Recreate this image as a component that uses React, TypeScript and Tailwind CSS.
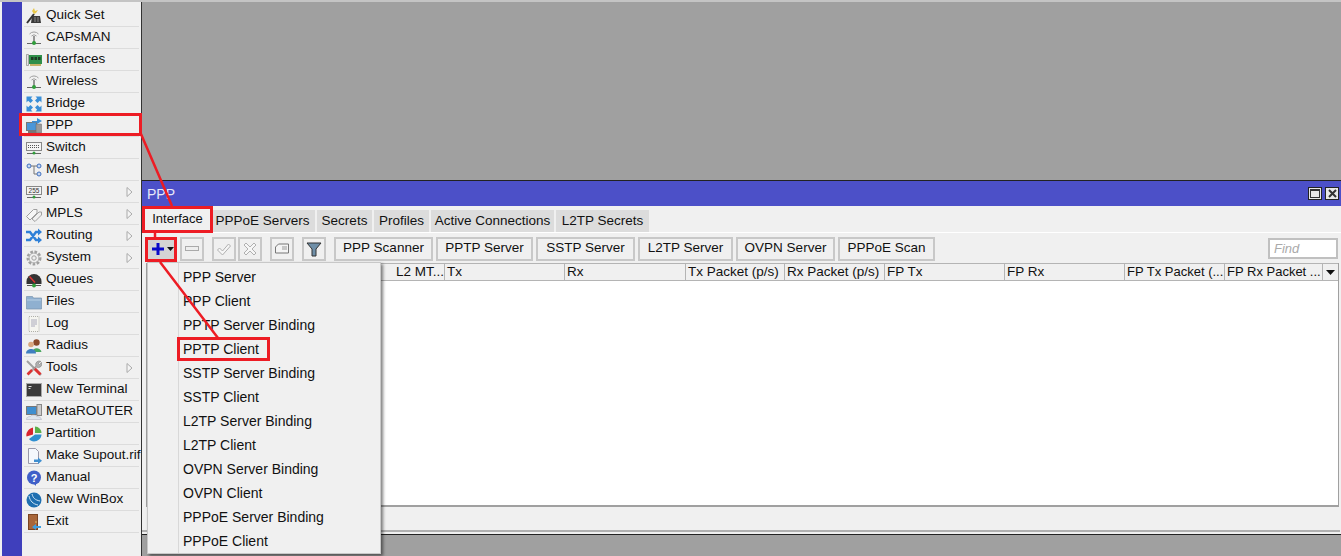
import type { ReactNode } from 'react';

const Svg = ({ children }: { children: ReactNode }) => (
  <svg width="16" height="16" viewBox="0 0 16 16" className="shrink-0">
    {children}
  </svg>
);

const Antenna = () => (
  <Svg>
    <path d="M3.500 4a6 6 0 0 1 9 0M5.500 6a3.500 3.500 0 0 1 5 0" fill="none" stroke="#a0a0a0" strokeWidth="1" />
    <path d="M8 6v6" stroke="#777" strokeWidth="1.500" />
    <path d="M1 13.500h14" stroke="#666" strokeWidth="1" />
    <circle cx="8" cy="13" r="2" fill="#2f9e3a" />
  </Svg>
);

const Chip = ({ label }: { label?: string }) => (
  <Svg>
    <rect x="0.500" y="2.500" width="15" height="8" fill="#f4f4f4" stroke="#888" />
    {label ? (
      <text x="8" y="9" fontSize="6.500" textAnchor="middle" fill="#333" fontFamily="Liberation Sans, sans-serif">
        {label}
      </text>
    ) : (
      <path d="M2 5.500h12M2 7.500h12" stroke="#555" strokeDasharray="1 1" />
    )}
    <path d="M1 13.500h14" stroke="#666" />
    <circle cx="8" cy="13" r="1.500" fill="#2f9e3a" />
  </Svg>
);

const icons: Record<string, ReactNode> = {
  'Quick Set': (
    <Svg>
      <path d="M6 8h8l1 7H5z" fill="#3a3a3a" />
      <path d="M1 15l7-9" stroke="#333" strokeWidth="2" />
      <path d="M6 3l2-3 1 3 3-1-2 3-2 1z" fill="#e8c84a" />
      <path d="M9 9v5M12 9v5" stroke="#8a8a8a" />
    </Svg>
  ),
  CAPsMAN: <Antenna />,
  Interfaces: (
    <Svg>
      <path d="M0.500 2.500h2v11h-2z" fill="#e4e4e4" stroke="#888" strokeWidth="0.700" />
      <rect x="3" y="3" width="13" height="9" fill="#2f8f4a" />
      <path d="M5 5h2.500v3H5zM8.500 5H11v3H8.500zM12 5h2.500v3H12z" fill="#1d3a25" />
      <path d="M4 13h11" stroke="#b89c3a" strokeWidth="1.500" />
    </Svg>
  ),
  Wireless: <Antenna />,
  Bridge: (
    <Svg>
      <path d="M0.500 0.500h6L4.800 2.200 7 4.500 4.500 7 2.200 4.800 0.500 6.500zM15.500 0.500v6l-1.700-1.700L11.500 7 9 4.500l2.200-2.300L9.500 0.500zM0.500 15.500v-6l1.700 1.700L4.500 9 7 11.500l-2.200 2.300 1.700 1.700zM15.500 15.500h-6l1.700-1.700L9 11.500 11.500 9l2.300 2.200 1.700-1.700z" fill="#3a8fd8" />
    </Svg>
  ),
  PPP: (
    <Svg>
      <rect x="0.500" y="4.500" width="10" height="8" fill="#4a96d8" stroke="#777" />
      <rect x="10" y="6" width="5.500" height="9" fill="#9a9a9a" stroke="#666" strokeWidth="0.500" />
      <path d="M2 14h8" stroke="#777" strokeWidth="2" />
      <path d="M6 3h5V0l5 3-5 3V4.500H6z" fill="#3a8fd8" />
    </Svg>
  ),
  Switch: <Chip />,
  Mesh: (
    <Svg>
      <circle cx="3" cy="4" r="2" fill="#c8d8f0" stroke="#3f6fc0" />
      <circle cx="13" cy="4" r="2" fill="#c8d8f0" stroke="#3f6fc0" />
      <circle cx="13" cy="12" r="2" fill="#c8d8f0" stroke="#3f6fc0" />
      <path d="M5 4h6M8 4v8h3" fill="none" stroke="#777" />
    </Svg>
  ),
  IP: <Chip label="255" />,
  MPLS: (
    <Svg>
      <path d="M0.500 10.500l7-7h3.500v3.500l-7 7z" fill="#f6f6f6" stroke="#a0a0a0" />
      <path d="M6 13l7-7h2.500v3l-6.500 6.500z" fill="#f0f0f0" stroke="#a0a0a0" />
    </Svg>
  ),
  Routing: (
    <Svg>
      <path d="M0 4h4l6 8h2M0 12h4l6-8h2" fill="none" stroke="#2f80d8" strokeWidth="2.500" />
      <path d="M12 0.500l4 3.500-4 3.500zM12 8.500l4 3.500-4 3.500z" fill="#2f80d8" />
    </Svg>
  ),
  System: (
    <Svg>
      <circle cx="8" cy="8" r="6" fill="none" stroke="#a0a0a0" strokeWidth="3" strokeDasharray="2.500 1.500" />
      <circle cx="8" cy="8" r="5" fill="none" stroke="#b4b4b4" />
      <circle cx="8" cy="8" r="2.200" fill="#eee" stroke="#a0a0a0" />
    </Svg>
  ),
  Queues: (
    <Svg>
      <path d="M0.500 9.500a7.500 7.500 0 0 1 15 0V12H0.500z" fill="#333" />
      <path d="M3.500 4.500l5.500 6" stroke="#d33" strokeWidth="1.500" />
      <path d="M1 13.500h14" stroke="#555" />
      <circle cx="8" cy="13.500" r="2" fill="#2f9e3a" />
    </Svg>
  ),
  Files: (
    <Svg>
      <path d="M0.500 2.500h6l1 1.500h8v11h-15z" fill="#8fb0d0" stroke="#7a93ad" strokeWidth="0.700" />
      <path d="M1 6h14" stroke="#b8cfe4" />
    </Svg>
  ),
  Log: (
    <Svg>
      <path d="M3 0.500h10v15H3z" fill="#f5f5f0" stroke="#b0b0a8" strokeDasharray="1 1" />
      <path d="M5 4h6M5 6h6M5 8h6M5 10h4" stroke="#aab" />
    </Svg>
  ),
  Radius: (
    <Svg>
      <circle cx="10.500" cy="4.500" r="3.200" fill="#8a4a2a" />
      <path d="M6.500 14c0-5 8-5 9 0z" fill="#4aa860" />
      <circle cx="5" cy="6.500" r="2.800" fill="#d9a77f" />
      <path d="M0 15.500c0-6 10-6 10 0z" fill="#3f7fc0" />
    </Svg>
  ),
  Tools: (
    <Svg>
      <path d="M1 1l14 14" stroke="#a0a0a0" strokeWidth="2" />
      <path d="M8 8l6.500 6.500" stroke="#d33" strokeWidth="3" />
      <path d="M15 1.500a3.500 3.500 0 0 0-5 4.500L1.500 13 3 14.500 10.500 7a3.500 3.500 0 0 0 5-4.500l-2 2-1.500-1.500z" fill="#b0b0b0" stroke="#777" strokeWidth="0.500" />
      <path d="M1.500 14.500L6 10" stroke="#d33" strokeWidth="2.500" />
    </Svg>
  ),
  'New Terminal': (
    <Svg>
      <rect x="0.500" y="1.500" width="15" height="13" fill="#3a3a3a" stroke="#a8a8a8" />
      <path d="M2.500 4.500h3M2.500 6.500h2" stroke="#ddd" />
    </Svg>
  ),
  MetaROUTER: (
    <Svg>
      <rect x="0.500" y="2.500" width="10" height="8" fill="#3f8fd0" stroke="#777" />
      <rect x="11" y="0.500" width="4.500" height="11" fill="#ccc" stroke="#888" />
      <path d="M0.500 15.500c0-3 3-3 4-3 1-2 5-2 6 0 2 0 5 1 5 3z" fill="#dfe6ee" stroke="#aab" strokeWidth="0.500" />
    </Svg>
  ),
  Partition: (
    <Svg>
      <path d="M7 1.500V8.500l-6.500 2c-1-4 2.500-8 6.500-9z" fill="#d9232e" />
      <path d="M9 0.500c3.500 0 6.500 3 6.500 6.500H9z" fill="#5bb04a" />
      <path d="M15.500 8.500c0 4-4 7-7.500 7-2 0-4-1-5-2.500l6-4.500z" fill="#2f8fd0" />
    </Svg>
  ),
  'Make Supout.rif': (
    <Svg>
      <path d="M2.500 0.500h7l3 3V15.500h-10z" fill="#f4f8fc" stroke="#99a" />
      <path d="M8 11.500h4v-2l4 3.200-4 3.200v-2H8z" fill="#3f8fd0" />
    </Svg>
  ),
  Manual: (
    <Svg>
      <circle cx="8" cy="7.500" r="7" fill="#3f5fc8" />
      <path d="M7 13l3 3v-3z" fill="#3f5fc8" />
      <text x="8" y="11.500" fontSize="11" fontWeight="700" textAnchor="middle" fill="#fff" fontFamily="Liberation Sans, sans-serif">
        ?
      </text>
    </Svg>
  ),
  'New WinBox': (
    <Svg>
      <circle cx="8" cy="8" r="7.500" fill="#1f6fb0" />
      <path d="M3 4c1 5 4 8 9 9M6 2c1 4 3 6 8 7" fill="none" stroke="#cfe6f7" />
    </Svg>
  ),
  Exit: (
    <Svg>
      <rect x="2.500" y="0.500" width="9" height="15" fill="#a8663a" stroke="#7a4522" />
      <circle cx="10" cy="8" r="0.800" fill="#f0d070" />
      <path d="M6 13l4-3v2h5v2h-5v2z" fill="#3f9fe0" />
    </Svg>
  ),
};

const menu = [
  ['Quick Set'], ['CAPsMAN'], ['Interfaces'], ['Wireless'], ['Bridge'], ['PPP'], ['Switch'], ['Mesh'],
  ['IP', 1], ['MPLS', 1], ['Routing', 1], ['System', 1], ['Queues'], ['Files'], ['Log'], ['Radius'],
  ['Tools', 1], ['New Terminal'], ['MetaROUTER'], ['Partition'], ['Make Supout.rif'], ['Manual'], ['New WinBox'], ['Exit'],
] as [string, number?][];

const tabs = [
  ['PPPoE Servers', 'w-[102px] pr-[3px]'],
  ['Secrets', 'w-[55px]'],
  ['Profiles', 'w-[55px]'],
  ['Active Connections', 'w-[123px]'],
  ['L2TP Secrets', 'w-[93px]'],
];

const textButtons = [
  ['PPP Scanner', 'w-[99px]'],
  ['PPTP Server', 'w-[97px]'],
  ['SSTP Server', 'w-[99px]'],
  ['L2TP Server', 'w-[95px]'],
  ['OVPN Server', 'w-[99px]'],
  ['PPPoE Scan', 'w-[97px]'],
];

const columns = [
  ['L2 MT...', 'w-[51px]'],
  ['Tx', 'w-[120px]'],
  ['Rx', 'w-[121px]'],
  ['Tx Packet (p/s)', 'w-[99px]'],
  ['Rx Packet (p/s)', 'w-[100px]'],
  ['FP Tx', 'w-[120px]'],
  ['FP Rx', 'w-[120px]'],
  ['FP Tx Packet (...', 'w-[100px] text-[13px]'],
  ['FP Rx Packet ...', 'w-[98px] text-[13px]'],
];

const addItems = [
  'PPP Server', 'PPP Client', 'PPTP Server Binding', 'PPTP Client', 'SSTP Server Binding', 'SSTP Client',
  'L2TP Server Binding', 'L2TP Client', 'OVPN Server Binding', 'OVPN Client', 'PPPoE Server Binding', 'PPPoE Client',
];

const IconButton = ({ children, className }: { children: ReactNode; className?: string }) => (
  <div className={`flex h-[24px] w-[24px] items-center justify-center border-2 border-[#c8c8c8] ${className ?? ''}`}>{children}</div>
);

export default function App() {
  return (
    <div className="relative flex h-[556px] w-[1341px] overflow-hidden border-t-2 border-[#c4c4c4] bg-[#a0a0a0] font-['Liberation_Sans',sans-serif] text-[13.500px] text-[#111]">
      {/* blue rail */}
      <div className="w-[22px] shrink-0 border-l-2 border-[#f0f0f0] bg-[#3f3fbc]" />

      {/* main menu */}
      <div className="w-[120px] shrink-0 border-r border-[#333] bg-[#f0f0f0] px-[2px] pt-[3px]">
        {menu.map(([name, sub]) => (
          <div key={name} className="flex h-[22px] items-center gap-[4px] border-b border-[#dcdcdc] pl-[2px]">
            {icons[name]}
            <span className="whitespace-nowrap">{name}</span>
            {sub ? (
              <svg width="7" height="10" viewBox="0 0 7 10" className="ml-auto mr-[6px]">
                <path d="M1 .5v9l5-4.500z" fill="#f5f5f5" stroke="#aaa" />
              </svg>
            ) : null}
          </div>
        ))}
      </div>

      {/* desktop with the PPP window */}
      <div className="flex min-w-0 flex-1 flex-col pt-[178px]">
        <div className="h-[355px] w-full border-y border-[#222] bg-[#f0f0f0]">
          <div className="flex h-[25px] items-center bg-[#4c50c8] pl-[5px] pr-[2px] text-[14px] text-[#e8e8f8]">
            <span className="pt-[2px]">PPP</span>
            <div className="ml-auto flex gap-[3px]">
              <div className="flex h-[13px] w-[14px] items-center justify-center border border-[#222] bg-[#e8e8e8]">
                <div className="h-[9px] w-[10px] border border-t-2 border-[#333]" />
              </div>
              <div className="flex h-[13px] w-[14px] items-center justify-center border border-[#222] bg-[#e8e8e8]">
                <svg width="9" height="9" viewBox="0 0 9 9">
                  <path d="M1 1l7 7M8 1l-7 7" stroke="#333" strokeWidth="2" />
                </svg>
              </div>
            </div>
          </div>

          {/* tabs */}
          <div className="flex h-[27px] border-b border-white pl-[1px]">
            <div className="flex w-[69px] items-center justify-center pb-[1px] text-[13px]">Interface</div>
            <div className="mt-[4px] flex gap-[2px] pl-[1px]">
              {tabs.map(([label, width]) => (
                <div key={label} className={`flex items-center justify-center bg-[#dcdcdc] pt-[1px] ${width}`}>
                  {label}
                </div>
              ))}
            </div>
          </div>

          {/* toolbar */}
          <div className="flex h-[30px] items-center pl-[4px] pr-[3px] pt-[1px]">
            <div className="flex h-[24px] w-[30px] items-center gap-[3px] bg-[#d4d4d4] pl-[6px]">
              <svg width="12" height="12" viewBox="0 0 12 12">
                <path d="M4.500 0h3v4.500H12v3H7.500V12h-3V7.500H0v-3h4.500z" fill="#0a0ac8" />
              </svg>
              <svg width="7" height="4" viewBox="0 0 7 4">
                <path d="M0 0h7L3.500 4z" fill="#111" />
              </svg>
            </div>
            <IconButton className="ml-[4px]">
              <div className="h-[5px] w-[14px] border border-[#aaa] bg-[#eee]" />
            </IconButton>
            <IconButton className="ml-[8px]">
              <svg width="16" height="14" viewBox="0 0 16 14">
                <path d="M1.500 8l2-2 3 3 6-7 2 2-8 9z" fill="#f6f6f6" stroke="#b0b0b0" />
              </svg>
            </IconButton>
            <IconButton className="ml-[2px]">
              <svg width="14" height="14" viewBox="0 0 14 14">
                <path d="M3 1l4 4 4-4 2 2-4 4 4 4-2 2-4-4-4 4-2-2 4-4-4-4z" fill="#f6f6f6" stroke="#b0b0b0" />
              </svg>
            </IconButton>
            <IconButton className="ml-[8px]">
              <svg width="16" height="14" viewBox="0 0 16 14">
                <path d="M1.500 5l3-3h10v9h-13z" fill="#f4f4f4" stroke="#777" />
                <path d="M8 5h5M8 7h5" stroke="#999" />
              </svg>
            </IconButton>
            <IconButton className="ml-[8px]">
              <svg width="16" height="16" viewBox="0 0 16 16">
                <path d="M1 2h14l-5 6v7H6V8z" fill="#6f8fa8" stroke="#333" />
              </svg>
            </IconButton>
            <div className="ml-[8px] flex gap-[3px]">
              {textButtons.map(([label, width]) => (
                <div key={label} className={`flex h-[24px] items-center justify-center border-2 border-[#c8c8c8] ${width}`}>
                  {label}
                </div>
              ))}
            </div>
            <div className="ml-auto flex h-[21px] w-[70px] items-center border-2 border-[#c0c0c0] bg-white pl-[4px] text-[13px] italic text-[#aaa]">
              Find
            </div>
          </div>

          {/* table */}
          <div className="ml-[4px] mr-[2px] border-x border-[#a0a0a0]">
            <div className="flex h-[18px] items-center border-y border-[#b4b4b4] pl-[247px]">
              {columns.map(([label, width]) => (
                <div key={label} className={`h-full shrink-0 overflow-hidden whitespace-nowrap border-r border-[#b4b4b4] pl-[2px] leading-[16px] ${width}`}>
                  {label}
                </div>
              ))}
              <div className="flex flex-1 items-center justify-center">
                <svg width="9" height="5" viewBox="0 0 9 5">
                  <path d="M0 0h9L4.500 5z" fill="#111" />
                </svg>
              </div>
            </div>
            <div className="h-[226px] border-b-2 border-[#a0a0a0] bg-white" />
          </div>
          <div className="mr-[1px] mt-[23px] border-b-2 border-[#b0b0b0]" />
        </div>
      </div>

      {/* add menu */}
      <div className="absolute left-[147px] top-[260px] w-[234px] border border-[#c8c8c8] bg-[#f0f0f0] pt-[2px] text-[14px] shadow-[2px_2px_3px_rgba(0,0,0,0.5)]">
        <div className="absolute bottom-0 left-[30px] top-0 w-px bg-[#d8d8d8]" />
        {addItems.map((item) => (
          <div key={item} className="flex h-[24px] items-center pl-[35px]">
            {item}
          </div>
        ))}
      </div>

      {/* red callouts */}
      <div className="absolute left-[19px] top-[111px] h-[23px] w-[123px] border-[3px] border-[#ed1c24]" />
      <div className="absolute left-[142px] top-[204px] h-[27px] w-[71px] border-[3px] border-[#ed1c24]" />
      <div className="absolute left-[145px] top-[235px] h-[25px] w-[32px] border-[3px] border-[#ed1c24]" />
      <div className="absolute left-[177px] top-[335px] h-[24px] w-[93px] border-[3px] border-[#ed1c24]" />
      <svg width="1341" height="556" className="pointer-events-none absolute left-0 top-[-2px]">
        <path d="M141 134L172 206M155 232V238M160 262L218 338" fill="none" stroke="#ed1c24" strokeWidth="2.500" />
      </svg>
    </div>
  );
}
